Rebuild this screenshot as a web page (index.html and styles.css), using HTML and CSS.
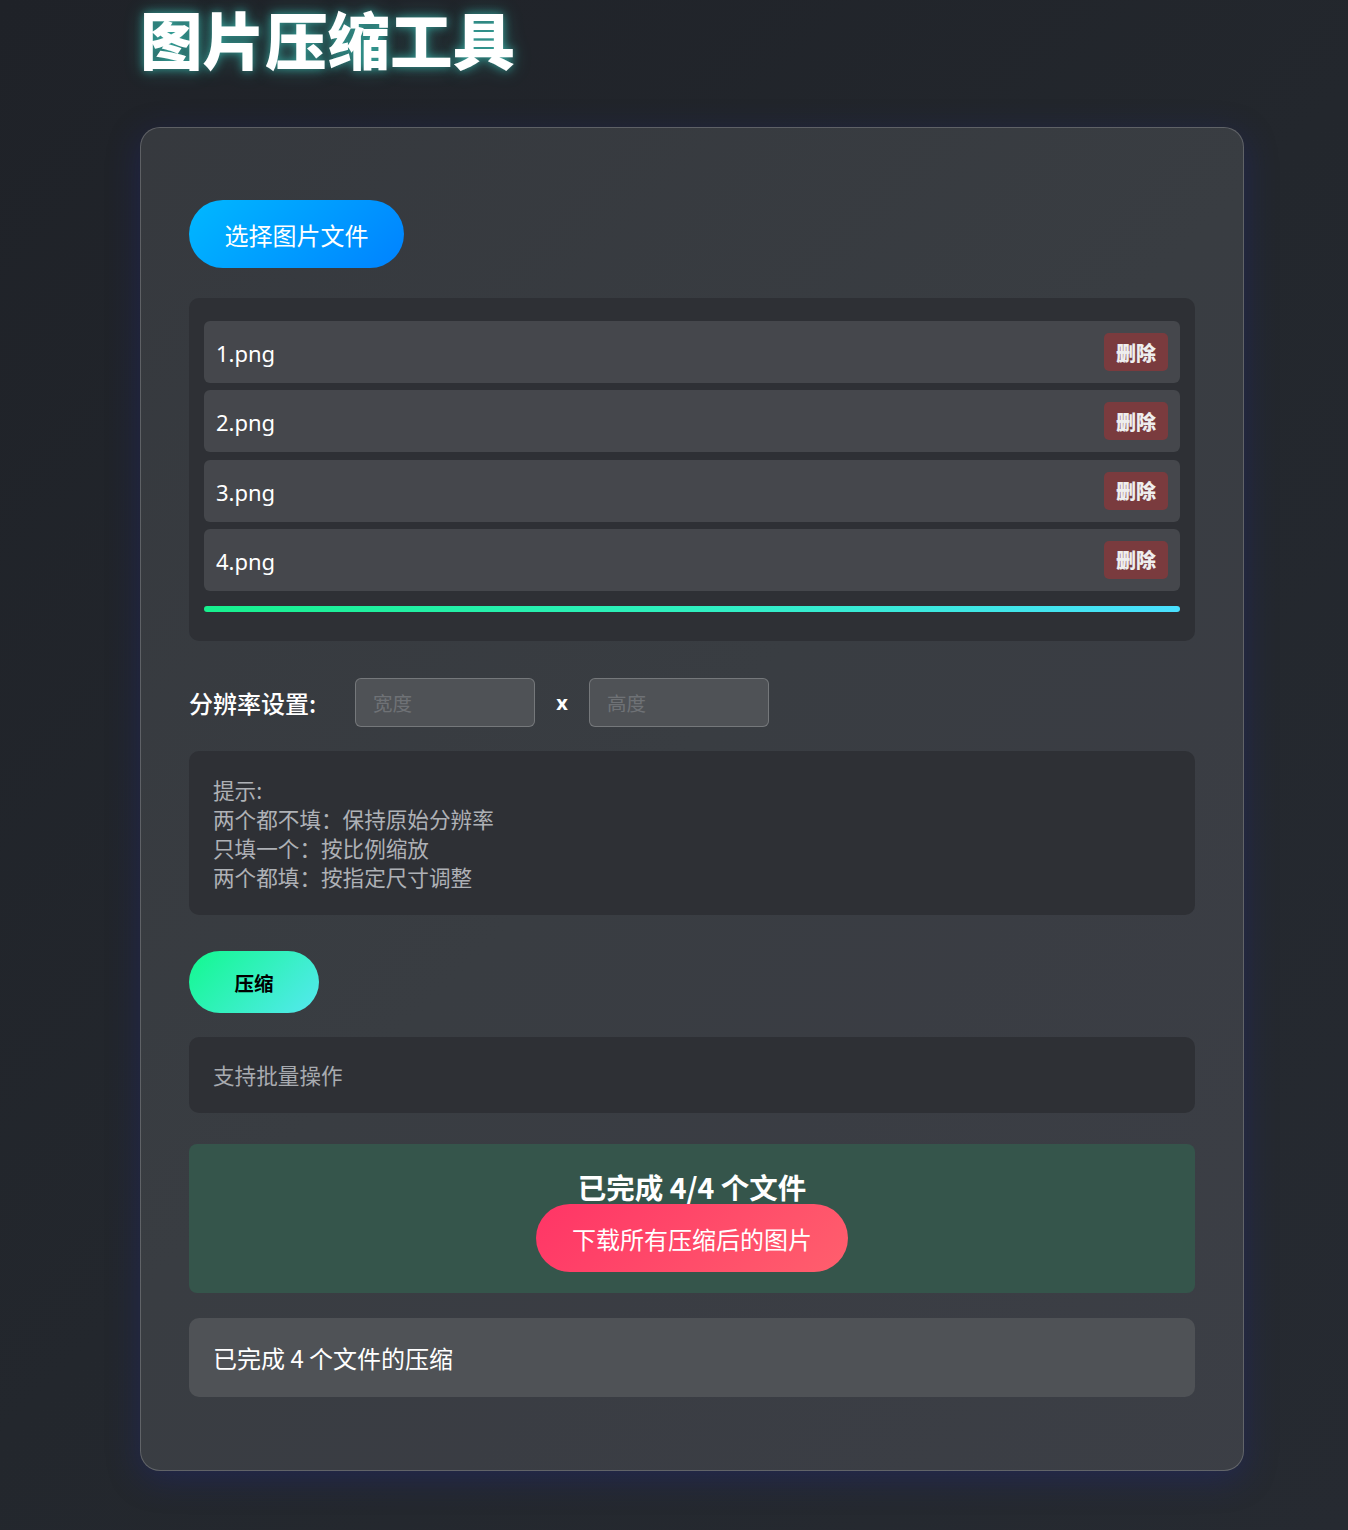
FILE: index.html
```html
<!DOCTYPE html>
<html lang="zh-CN">
<head>
<meta charset="utf-8">
<title>图片压缩工具</title>
<link rel="stylesheet" href="styles.css">
</head>
<body>
<div class="page">
  <h1 class="title">图片压缩工具</h1>
  <div class="card">
    <button class="btn-select">选择图片文件</button>

    <div class="file-list">
      <div class="file-item"><span class="file-name">1.png</span><button class="btn-del">删除</button></div>
      <div class="file-item"><span class="file-name">2.png</span><button class="btn-del">删除</button></div>
      <div class="file-item"><span class="file-name">3.png</span><button class="btn-del">删除</button></div>
      <div class="file-item"><span class="file-name">4.png</span><button class="btn-del">删除</button></div>
      <div class="progress"><div class="progress-fill"></div></div>
    </div>

    <div class="res-row">
      <label class="res-label">分辨率设置:</label>
      <input class="res-input" type="text" placeholder="宽度">
      <span class="res-x">x</span>
      <input class="res-input" type="text" placeholder="高度">
    </div>

    <div class="hint">
      提示:<br>
      两个都不填：保持原始分辨率<br>
      只填一个：按比例缩放<br>
      两个都填：按指定尺寸调整
    </div>

    <button class="btn-compress">压缩</button>

    <div class="status">支持批量操作</div>

    <div class="done">
      <div class="done-title">已完成 4/4 个文件</div>
      <button class="btn-download">下载所有压缩后的图片</button>
    </div>

    <div class="result">已完成 4 个文件的压缩</div>
  </div>
</div>
</body>
</html>
```

FILE: styles.css
```css
* { box-sizing: border-box; }
html, body { margin: 0; padding: 0; }
body {
  min-height: 1530px;
  background: linear-gradient(135deg, #1f2228 0%, #23272d 50%, #262a31 100%);
  font-family: "Noto Sans", "Noto Sans CJK SC", sans-serif;
  color: #fff;
}
.page {
  width: 1104px;
  margin-left: 140px;
  padding-bottom: 59px;
}
.title {
  margin: 0 0 51px 0;
  font-family: "Noto Sans CJK SC", sans-serif;
  font-size: 62.5px;
  line-height: 76px;
  font-weight: 900;
  color: #fff;
  text-shadow: 0 0 10px rgba(64, 224, 208, 0.6), 0 0 20px rgba(64, 224, 208, 0.3);
}
.card {
  background: rgba(255, 255, 255, 0.1);
  border: 1px solid rgba(255, 255, 255, 0.2);
  border-radius: 20px;
  padding: 72px 48px 73px;
  box-shadow: 0 8px 32px 0 rgba(31, 38, 135, 0.37);
}
button { font-family: inherit; border: none; cursor: pointer; }
.btn-select {
  display: block;
  height: 68px;
  padding: 0 35px;
  border-radius: 34px;
  background: linear-gradient(135deg, #00b8ff 0%, #0082ff 100%);
  color: #fff;
  font-size: 24px;
  font-family: "Noto Sans CJK SC", sans-serif;
  width: 215px;
}
.file-list {
  margin-top: 30px;
  background: #2e3035;
  border-radius: 10px;
  padding: 23px 15px 29px;
  display: flex;
  flex-direction: column;
  gap: 7.33px;
}
.file-item {
  height: 62px;
  background: #45474c;
  border-radius: 6px;
  display: flex;
  align-items: center;
  justify-content: space-between;
  padding: 0 12px;
}
.file-name {
  font-size: 22px;
  color: #fff;
  padding-top: 2px;
}
.btn-del {
  width: 64px;
  height: 38px;
  border-radius: 5px;
  background: #7a3b3e;
  color: #eee;
  font-size: 20px;
  font-weight: 900;
  font-family: "Noto Sans CJK SC", sans-serif;
  padding: 0;
}
.progress {
  margin-top: 8px;
  height: 6px;
  border-radius: 3px;
  background: #2e3035;
}
.progress-fill {
  height: 100%;
  width: 100%;
  border-radius: 3px;
  background: linear-gradient(90deg, #17f08e 0%, #2ff0c0 50%, #4ae0ff 100%);
}
.res-row {
  margin-top: 37px;
  display: flex;
  align-items: center;
  height: 49px;
}
.res-label {
  font-family: "Noto Sans CJK SC", sans-serif;
  font-size: 24px;
  font-weight: 500;
  color: #fff;
  width: 166px;
}
.res-input {
  width: 180px;
  height: 49px;
  background: #4f5256;
  border: 1px solid rgba(255, 255, 255, 0.22);
  border-radius: 6px;
  padding: 0 17px;
  font-family: "Noto Sans CJK SC", sans-serif;
  font-size: 19.5px;
  color: #fff;
  outline: none;
}
.res-input::placeholder { color: #6f7276; }
.res-x {
  width: 54px;
  text-align: center;
  font-size: 20px;
  font-weight: 700;
  color: #fff;
}
.hint {
  margin-top: 24px;
  background: #2e3035;
  border-radius: 10px;
  padding: 24px 24px 24px;
  font-family: "Noto Sans CJK SC", sans-serif;
  font-size: 21.6px;
  line-height: 29px;
  color: #aeb1b6;
}
.btn-compress {
  display: block;
  margin-top: 36px;
  width: 130px;
  height: 62px;
  border-radius: 31px;
  background: linear-gradient(135deg, #12f98e 0%, #55e8f0 100%);
  color: #000;
  font-size: 19.5px;
  font-weight: 700;
  font-family: "Noto Sans CJK SC", sans-serif;
}
.status {
  margin-top: 24px;
  background: #2e3035;
  border-radius: 10px;
  padding: 24px;
  font-family: "Noto Sans CJK SC", sans-serif;
  font-size: 21.6px;
  line-height: 28px;
  color: #a8abb0;
}
.done {
  margin-top: 31px;
  background: #35554b;
  border-radius: 8px;
  padding: 26px 0 21px;
  display: flex;
  flex-direction: column;
  align-items: center;
}
.done-title {
  font-family: "Noto Sans CJK SC", sans-serif;
  font-size: 28.5px;
  line-height: 34px;
  font-weight: 700;
  color: #fff;
}
.btn-download {
  height: 68px;
  width: 312px;
  border-radius: 34px;
  background: linear-gradient(135deg, #ff3566 0%, #ff5f6d 100%);
  color: #fff;
  font-size: 24px;
  font-family: "Noto Sans CJK SC", sans-serif;
}
.result {
  margin-top: 25px;
  background: #4f5256;
  border-radius: 10px;
  padding: 24px;
  font-family: "Noto Sans CJK SC", sans-serif;
  font-size: 24px;
  line-height: 31px;
  color: #fff;
}
```
